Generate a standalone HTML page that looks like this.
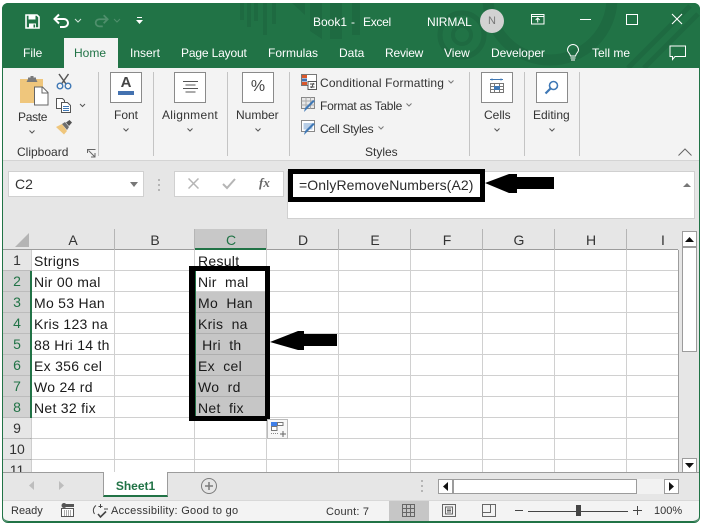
<!DOCTYPE html>
<html><head><meta charset="utf-8"><style>
html,body{margin:0;padding:0;background:#fff;width:704px;height:526px;overflow:hidden}
#r{position:relative;width:704px;height:526px;overflow:hidden;font-family:"Liberation Sans",sans-serif;color:#333}
#r div,#r span.a,#r svg{position:absolute}
.t{white-space:pre;line-height:16px;font-size:12px}
.w{color:#fff}
.c{white-space:pre;font-size:14px;line-height:21px;color:#1a1a1a;height:21px;letter-spacing:.28px}
.h{font-size:14px;line-height:20px;text-align:center;color:#333;top:230px}
.n{font-size:14px;line-height:21px;text-align:center;left:3px;width:28px;color:#333;background:#e6e6e6}
.box{background:#fff;border:1px solid #8a8a8a;box-sizing:border-box}
.sep{width:1px;background:#c4c4c4;top:72px;height:84px}
</style></head><body><div id="r">
<!-- window -->
<div style="left:2px;top:3px;width:698px;height:520px;background:#e6e6e6;border-radius:6px;box-sizing:border-box;border:1px solid #217346"></div>
<div style="left:2px;top:3px;width:698px;height:65px;background:#217346;border-radius:6px 6px 0 0"></div>
<!-- title pattern -->
<svg style="left:240px;top:3px" width="460" height="65" viewBox="0 0 460 65" fill="none">
<g stroke="#1e6a41" stroke-width="4"><path d="M2 0V17M9 0V24M16 0V18M25 0V32M34 0V21"/></g>
<g fill="#1e6a41"><path d="M52 0h13v12zM70 0h12v36l-12-8zM90 0h12v36H90zM112 0h8v32h-8z"/></g>
<g stroke="#1e6a41"><circle cx="222" cy="32" r="22" stroke-width="5"/><circle cx="222" cy="32" r="9" stroke-width="4"/><circle cx="310" cy="-5" r="62" stroke-width="11"/><path d="M388 65L450 3M404 65L458 11" stroke-width="5"/></g>
</svg>
<!-- QAT -->
<svg style="left:25px;top:14px" width="15" height="15" viewBox="0 0 15 15" fill="none"><path d="M1 1h11l2 2v11H1z" stroke="#fff" stroke-width="1.6"/><path d="M3.5 1.5h7v4h-7zM4 9.5h7v4.5H4z" fill="#fff"/><rect x="8.5" y="10.5" width="1.6" height="3" fill="#217346"/></svg>
<svg style="left:53px;top:13px" width="18" height="16" viewBox="0 0 18 16" fill="none"><path d="M2 6h9a4 4 0 0 1 0 8H7M6 1.5L1.5 6 6 10.5" stroke="#fff" stroke-width="2"/></svg>
<svg style="left:74px;top:18px" width="8" height="5" viewBox="0 0 8 5" fill="none"><path d="M1 1l3 3 3-3" stroke="#d5e5dc" stroke-width="1"/></svg>
<svg style="left:93px;top:13px" width="16" height="16" viewBox="0 0 18 16" fill="none"><path d="M16 6H7a4 4 0 0 0 0 8h4M12 1.5L16.5 6 12 10.5" stroke="#4f8f6c" stroke-width="2"/></svg>
<svg style="left:113px;top:18px" width="8" height="5" viewBox="0 0 8 5" fill="none"><path d="M1 1l3 3 3-3" stroke="#4f8f6c" stroke-width="1"/></svg>
<svg style="left:135px;top:16px" width="9" height="10" viewBox="0 0 9 10"><path d="M2 1h5v1H2zM1 4h7L4.500 8z" fill="#fff"/></svg>
<div class="t w" style="left:313px;top:14px;font-size:12px">Book1</div>
<div class="t w" style="left:351px;top:14px">-</div>
<div class="t w" style="left:363px;top:14px;letter-spacing:-.3px">Excel</div>
<div class="t w" style="left:427px;top:14px;letter-spacing:-.1px">NIRMAL</div>
<div style="left:480px;top:9px;width:24px;height:24px;border-radius:50%;background:#d2d2d2;color:#777;font-size:11px;line-height:24px;text-align:center">N</div>
<svg style="left:531px;top:14px" width="14" height="11" viewBox="0 0 14 11" fill="none"><path d="M.5 .5h12.500v9.500H.5zM.5 2.500h12.500M6.700 8.500V4.500M4.700 6l2-2 2 2" stroke="#fff"/></svg>
<div style="left:580px;top:19px;width:11px;height:1px;background:#fff"></div>
<div style="left:626px;top:14px;width:10px;height:9px;border:1px solid #fff"></div>
<svg style="left:671px;top:13px" width="12" height="12" viewBox="0 0 12 12"><path d="M1 1l10 10M11 1L1 11" stroke="#fff" stroke-width="1.100"/></svg>
<!-- tabs -->
<div style="left:64px;top:38px;width:54px;height:30px;background:#f3f3f3"></div>
<div class="t w" style="left:23px;top:45px">File</div>
<div class="t" style="left:74px;top:45px;color:#217346">Home</div>
<div class="t w" style="left:130px;top:45px">Insert</div>
<div class="t w" style="left:181px;top:45px;letter-spacing:-.15px">Page Layout</div>
<div class="t w" style="left:268px;top:45px">Formulas</div>
<div class="t w" style="left:339px;top:45px">Data</div>
<div class="t w" style="left:385px;top:45px;letter-spacing:-.2px">Review</div>
<div class="t w" style="left:444px;top:45px">View</div>
<div class="t w" style="left:491px;top:45px;letter-spacing:-.1px">Developer</div>
<svg style="left:566px;top:44px" width="14" height="18" viewBox="0 0 14 18" fill="none"><path d="M4.500 12C4 9 1.500 8.500 1.500 6a5.500 5.500 0 0 1 11 0c0 2.500-2.500 3-3 6zM4.500 14h5M5 16h4" stroke="#fff"/></svg>
<div class="t w" style="left:592px;top:45px">Tell me</div>
<svg style="left:669px;top:45px" width="18" height="16" viewBox="0 0 18 16" fill="none"><path d="M1 1h15.500v10.500H6L3.500 14.500v-3H1z" stroke="#fff"/></svg>
<!-- ribbon -->
<div style="left:3px;top:68px;width:696px;height:92px;background:#f3f3f3;border-bottom:1px solid #d4d4d4"></div>
<!-- paste -->
<svg style="left:19px;top:75px" width="30" height="31" viewBox="0 0 30 31"><path d="M1 4h23v24H1z" fill="#efc67c"/><path d="M9 4V2.500h2.500V1h3v1.500H17V4l1.500 3h-11z" fill="#7a7a7a"/><path d="M15.500 12h8l5.500 5.500V30H15.500z" fill="#fff" stroke="#666"/><path d="M23 12v6h6" fill="none" stroke="#666"/></svg>
<div class="t" style="left:18px;top:109px;letter-spacing:-.3px">Paste</div>
<svg style="left:29px;top:130px" width="6" height="4" viewBox="0 0 6 4" fill="none"><path d="M.5 .5L3 3 5.500 .5" stroke="#555"/></svg>
<svg style="left:56px;top:73px" width="16" height="17" viewBox="0 0 16 17" fill="none"><path d="M3 1l7 10M12.500 1l-7 10" stroke="#555" stroke-width="1.500"/><circle cx="4" cy="13" r="2.800" stroke="#3f78b5" stroke-width="1.400"/><circle cx="12" cy="13" r="2.800" stroke="#3f78b5" stroke-width="1.400"/></svg>
<svg style="left:56px;top:98px" width="16" height="15" viewBox="0 0 16 15" fill="#fff" stroke="#555"><path d="M.5 .5h6l2 2v8H.5z"/><path d="M5.500 4.500h6l3 3v7h-9z"/><path d="M7 8.500h6M7 10.500h6M7 12.500h6" stroke="#3f78b5"/></svg>
<svg style="left:79px;top:103px" width="7" height="5" viewBox="0 0 7 5" fill="none"><path d="M1 1l2.500 2.500L6 1" stroke="#555"/></svg>
<svg style="left:56px;top:120px" width="17" height="15" viewBox="0 0 17 15"><path d="M0 7l6-3 5 7-3 3.500z" fill="#efc67c"/><path d="M6 4l3-2 4 5-2 3z" fill="#6f6f6f"/><path d="M10 2.500L13.500 0 16 2.500 13 6z" fill="#555"/></svg>
<div class="t" style="left:17px;top:144px">Clipboard</div>
<svg style="left:87px;top:149px" width="9" height="9" viewBox="0 0 9 9" fill="none" stroke="#666"><path d="M.5 4V.5h8M1.500 1.500L7.500 7.500M8 4v4H4"/></svg>
<div class="sep" style="left:98px"></div>
<!-- font etc -->
<div class="box" style="left:110px;top:72px;width:32px;height:31px"></div>
<div style="left:110px;top:72px;width:32px;text-align:center;font-size:15px;line-height:22px;font-weight:bold;color:#444">A</div>
<div style="left:118px;top:91px;width:16px;height:4px;background:#4472b0"></div>
<div class="t" style="left:114px;top:107px">Font</div>
<svg style="left:123px;top:128px" width="6" height="4" viewBox="0 0 6 4" fill="none"><path d="M.5 .5L3 3 5.500 .5" stroke="#555"/></svg>
<div class="sep" style="left:153px"></div>
<div class="box" style="left:174px;top:72px;width:32px;height:31px"></div>
<svg style="left:183px;top:81px" width="15" height="12" viewBox="0 0 15 12" stroke="#555"><path d="M0 .5h15M2.500 4h10M0 7.500h15M2.500 11h10"/></svg>
<div class="t" style="left:162px;top:107px;letter-spacing:.3px">Alignment</div>
<svg style="left:187px;top:128px" width="6" height="4" viewBox="0 0 6 4" fill="none"><path d="M.5 .5L3 3 5.500 .5" stroke="#555"/></svg>
<div class="sep" style="left:227px"></div>
<div class="box" style="left:242px;top:72px;width:32px;height:31px"></div>
<div style="left:242px;top:78px;width:32px;text-align:center;font-size:16px;line-height:18px;color:#444">%</div>
<div class="t" style="left:236px;top:107px">Number</div>
<svg style="left:255px;top:128px" width="6" height="4" viewBox="0 0 6 4" fill="none"><path d="M.5 .5L3 3 5.500 .5" stroke="#555"/></svg>
<div class="sep" style="left:289px"></div>
<!-- styles -->
<svg style="left:301px;top:74px" width="16" height="16" viewBox="0 0 16 16"><path d="M.5 .5h15v11H.5z" fill="#fff" stroke="#777"/><path d="M1 1h5v3H1z" fill="#d9572b"/><path d="M1 4.500h5v3H1z" fill="#4472b0"/><path d="M1 8h5v3H1z" fill="#d9572b"/><path d="M7 7.500h8.500v8H7z" fill="#fff" stroke="#555"/><path d="M9 10h4.500M9 13h4.500M12.500 9l-2 5" stroke="#444" fill="none"/></svg>
<div class="t" style="left:320px;top:75px;font-size:12px;letter-spacing:.15px">Conditional Formatting</div>
<svg style="left:448px;top:80px" width="6" height="4" viewBox="0 0 6 4" fill="none"><path d="M.5 .5L3 3 5.500 .5" stroke="#777"/></svg>
<svg style="left:301px;top:97px" width="16" height="16" viewBox="0 0 16 16"><path d="M.5 .5h13v11H.5z" fill="#e8e8e8" stroke="#888"/><path d="M5 .5v11M9.500 .5v11M.5 4h13M.5 8h13" stroke="#aaa" fill="none"/><path d="M14 4L5 13l-2 2 1-4 8-8z" fill="#3f78b5"/></svg>
<div class="t" style="left:320px;top:98px;letter-spacing:-.25px">Format as Table</div>
<svg style="left:406px;top:103px" width="6" height="4" viewBox="0 0 6 4" fill="none"><path d="M.5 .5L3 3 5.500 .5" stroke="#777"/></svg>
<svg style="left:301px;top:120px" width="16" height="16" viewBox="0 0 16 16"><path d="M.5 .5h13v11H.5z" fill="#fff" stroke="#888"/><path d="M2.500 3h9v6.500h-9z" fill="#b7cde6"/><path d="M14 4L5 13l-2 2 1-4 8-8z" fill="#3f78b5"/></svg>
<div class="t" style="left:320px;top:121px;letter-spacing:-.3px">Cell Styles</div>
<svg style="left:378px;top:126px" width="6" height="4" viewBox="0 0 6 4" fill="none"><path d="M.5 .5L3 3 5.500 .5" stroke="#777"/></svg>
<div class="t" style="left:365px;top:144px">Styles</div>
<div class="sep" style="left:469px"></div>
<div class="box" style="left:481px;top:72px;width:32px;height:31px"></div>
<svg style="left:489px;top:78px" width="16" height="18" viewBox="0 0 16 18" fill="none"><path d="M1 1.500h13M3 .5v2M12 .5v2" stroke="#3f78b5"/><path d="M1.500 5.500h13v9h-13zM1.500 8.500h13M1.500 11.500h13M5.500 5.500v9M10.500 5.500v9" stroke="#777"/><rect x="5" y="8" width="6" height="4" fill="#3f78b5"/></svg>
<div class="t" style="left:484px;top:107px">Cells</div>
<svg style="left:494px;top:128px" width="6" height="4" viewBox="0 0 6 4" fill="none"><path d="M.5 .5L3 3 5.500 .5" stroke="#555"/></svg>
<div class="sep" style="left:524px"></div>
<div class="box" style="left:536px;top:72px;width:32px;height:31px"></div>
<svg style="left:544px;top:80px" width="15" height="15" viewBox="0 0 15 15" fill="none"><circle cx="9.500" cy="5.500" r="4" stroke="#3f78b5" stroke-width="1.600"/><path d="M6.500 8.500L1.500 13.500" stroke="#3f78b5" stroke-width="2.200"/></svg>
<div class="t" style="left:533px;top:107px">Editing</div>
<svg style="left:549px;top:128px" width="6" height="4" viewBox="0 0 6 4" fill="none"><path d="M.5 .5L3 3 5.500 .5" stroke="#555"/></svg>
<div class="sep" style="left:579px"></div>
<svg style="left:678px;top:148px" width="14" height="8" viewBox="0 0 14 8" fill="none"><path d="M.5 7.500L7 1l6.500 6.500" stroke="#666"/></svg>
<!-- formula bar -->
<div style="left:8px;top:171px;width:136px;height:26px;background:#fff;border:1px solid #d0d0d0;box-sizing:border-box"></div>
<div class="t" style="left:15px;top:176px;font-size:14px">C2</div>
<svg style="left:130px;top:182px" width="8" height="5" viewBox="0 0 8 5"><path d="M0 0h8L4 5z" fill="#777"/></svg>
<svg style="left:158px;top:179px" width="3" height="13" viewBox="0 0 3 13" fill="#b5b5b5"><path d="M0 0h2v2H0zM0 5h2v2H0zM0 10h2v2H0z"/></svg>
<div style="left:174px;top:171px;width:110px;height:26px;background:#fff;border:1px solid #d0d0d0;box-sizing:border-box"></div>
<svg style="left:188px;top:178px" width="11" height="11" viewBox="0 0 11 11"><path d="M.5 .5l10 10M10.500 .5L.5 10.500" stroke="#b5b5b5" stroke-width="1.500"/></svg>
<svg style="left:222px;top:178px" width="14" height="12" viewBox="0 0 14 12" fill="none"><path d="M1 6l4 4 8-9" stroke="#b5b5b5" stroke-width="2"/></svg>
<div style="left:259px;top:175px;font:italic bold 13px 'Liberation Serif',serif;color:#666;line-height:16px">fx</div>
<div style="left:287px;top:171px;width:408px;height:48px;background:#fff;border:1px solid #d0d0d0;box-sizing:border-box"></div>
<div class="t" style="left:299px;top:177px;font-size:14px;color:#2b2b2b;letter-spacing:.1px">=OnlyRemoveNumbers(A2)</div>
<svg style="left:683px;top:182px" width="8" height="5" viewBox="0 0 8 5"><path d="M0 5L4 1l4 4z" fill="#777"/></svg>
<!-- annotation box -->
<div style="left:288px;top:169px;width:197px;height:33px;border:5px solid #000;box-sizing:border-box"></div>
<svg style="left:485px;top:173px" width="70" height="22" viewBox="0 0 70 22"><path d="M0 10L24 1h8v3h37v12H32v4h-8z" fill="#000"/></svg>
<!-- column headers -->
<div style="left:3px;top:229px;width:675px;height:21px;background:#e6e6e6;border-bottom:1px solid #9c9c9c;box-sizing:border-box"></div>
<svg style="left:15px;top:233px" width="14" height="14" viewBox="0 0 14 14"><path d="M14 0v14H0z" fill="#b4b4b4"/></svg>
<div style="left:194px;top:229px;width:73px;height:21px;background:#c8c8c8;border-bottom:2px solid #217346;box-sizing:border-box"></div>
<div class="h" style="left:31px;width:84px">A</div>
<div class="h" style="left:115px;width:80px">B</div>
<div class="h" style="left:195px;width:72px;color:#217346">C</div>
<div class="h" style="left:267px;width:72px">D</div>
<div class="h" style="left:339px;width:72px">E</div>
<div class="h" style="left:411px;width:72px">F</div>
<div class="h" style="left:483px;width:72px">G</div>
<div class="h" style="left:555px;width:72px">H</div>
<div class="h" style="left:627px;width:72px">I</div>
<svg style="left:0;top:0;width:704px;height:526px" width="704" height="526" viewBox="0 0 704 526">
<rect x="31" y="250" width="647" height="222" fill="#fff"/>
<rect x="3" y="250" width="28" height="222" fill="#e6e6e6"/>
<rect x="3" y="271" width="28" height="147" fill="#d2d2d2"/>
<rect x="195" y="292" width="72" height="126" fill="#c6c6c6"/>
<g stroke="#d0d0d0"><path d="M31 270.500H678M31 291.500H678M31 312.500H678M31 333.500H678M31 354.500H678M31 375.500H678M31 396.500H678M31 417.500H678M31 438.500H678M31 459.500H678"/><path d="M114.500 250V472M194.500 250V472M266.500 250V472M338.500 250V472M410.500 250V472M482.500 250V472M554.500 250V472M626.500 250V472"/></g>
<path d="M195 312.500H267M195 333.500H267M195 354.500H267M195 375.500H267M195 396.500H267" stroke="#aeaeae"/>
<path d="M114.500 229V250M194.500 229V250M266.500 229V250M338.500 229V250M410.500 229V250M482.500 229V250M554.500 229V250M626.500 229V250" stroke="#b5b5b5"/>
<path d="M3 270.500H31M3 291.500H31M3 312.500H31M3 333.500H31M3 354.500H31M3 375.500H31M3 396.500H31M3 417.500H31M3 438.500H31M3 459.500H31" stroke="#bcbcbc"/>
<path d="M31 250V472" stroke="#9c9c9c"/><path d="M678.500 250V472" stroke="#9c9c9c"/>
<rect x="30" y="271" width="2" height="147" fill="#217346"/>
</svg>
<div class="n" style="top:250px;height:20px">1</div>
<div class="n" style="top:271px;background:none;color:#217346">2</div>
<div class="n" style="top:292px;background:none;color:#217346">3</div>
<div class="n" style="top:313px;background:none;color:#217346">4</div>
<div class="n" style="top:334px;background:none;color:#217346">5</div>
<div class="n" style="top:355px;background:none;color:#217346">6</div>
<div class="n" style="top:376px;background:none;color:#217346">7</div>
<div class="n" style="top:397px;background:none;color:#217346">8</div>
<div class="n" style="top:418px;height:20px">9</div>
<div class="n" style="top:439px;height:20px">10</div>
<div class="n" style="top:460px;height:12px;overflow:hidden;line-height:21px">11</div>
<div class="c" style="left:34px;top:251px">Strigns</div>
<div class="c" style="left:34px;top:272px">Nir 00 mal</div>
<div class="c" style="left:34px;top:293px">Mo 53 Han</div>
<div class="c" style="left:34px;top:314px">Kris 123 na</div>
<div class="c" style="left:34px;top:335px">88 Hri 14 th</div>
<div class="c" style="left:34px;top:356px">Ex 356 cel</div>
<div class="c" style="left:34px;top:377px">Wo 24 rd</div>
<div class="c" style="left:34px;top:398px">Net 32 fix</div>
<div class="c" style="left:198px;top:251px">Result</div>
<div class="c" style="left:198px;top:272px">Nir  mal</div>
<div class="c" style="left:198px;top:293px">Mo  Han</div>
<div class="c" style="left:198px;top:314px">Kris  na</div>
<div class="c" style="left:198px;top:335px"> Hri  th</div>
<div class="c" style="left:198px;top:356px">Ex  cel</div>
<div class="c" style="left:198px;top:377px">Wo  rd</div>
<div class="c" style="left:198px;top:398px">Net  fix</div>
<!-- annotation on grid -->
<div style="left:189px;top:266px;width:81px;height:155px;border:solid #000;border-width:5px 5px 5px 6px;box-sizing:border-box"></div>
<div style="left:195px;top:271px;width:1px;height:145px;background:#217346"></div>
<svg style="left:270px;top:330px" width="68" height="22" viewBox="0 0 68 22"><path d="M0 12L28 1h6v3h33v12H34v4h-6z" fill="#000"/></svg>
<!-- quick analysis -->
<svg style="left:267px;top:419px" width="21" height="20" viewBox="0 0 21 20"><rect x=".5" y=".5" width="20" height="19" fill="#f8f8f8" stroke="#bbb"/><rect x="4" y="3" width="6" height="4" fill="#3f7fe8"/><path d="M10.500 3.500h5.500v3h-5.500zM4.500 7.500h5.500v4h-5.500z" fill="#fff" stroke="#777"/><path d="M13 15h6M16 12v6" stroke="#666"/><path d="M4 14.500h7" stroke="#888" stroke-dasharray="1 1"/></svg>
<!-- vertical scrollbar -->
<div style="left:679px;top:229px;width:20px;height:243px;background:#e6e6e6"></div>
<div class="box" style="left:682px;top:231px;width:15px;height:16px;border-color:#9c9c9c"></div>
<svg style="left:685px;top:237px" width="9" height="5" viewBox="0 0 9 5"><path d="M0 5L4.500 0 9 5z" fill="#111"/></svg>
<div class="box" style="left:682px;top:247px;width:15px;height:105px;border-color:#9c9c9c"></div>
<div class="box" style="left:682px;top:458px;width:15px;height:15px;border-color:#9c9c9c"></div>
<svg style="left:685px;top:463px" width="9" height="5" viewBox="0 0 9 5"><path d="M0 0L4.500 5 9 0z" fill="#111"/></svg>
<!-- sheet tabs -->
<div style="left:3px;top:472px;width:696px;height:28px;background:#e6e6e6;border-top:1px solid #9c9c9c;box-sizing:border-box"></div>
<div style="left:103px;top:472px;width:65px;height:25px;background:#fff;border:1px solid #9c9c9c;border-top:0;border-bottom:2px solid #217346;box-sizing:border-box"></div>
<div class="t" style="left:103px;top:478px;width:65px;text-align:center;font-weight:bold;color:#217346">Sheet1</div>
<svg style="left:29px;top:481px" width="6" height="9" viewBox="0 0 6 9"><path d="M5 0L0 4.500 5 9z" fill="#bdbdbd"/></svg>
<svg style="left:58px;top:481px" width="6" height="9" viewBox="0 0 6 9"><path d="M1 0L6 4.500 1 9z" fill="#bdbdbd"/></svg>
<svg style="left:200px;top:477px" width="18" height="18" viewBox="0 0 18 18" fill="none"><circle cx="9" cy="9" r="7.500" stroke="#7c7c7c"/><path d="M9 5v8M5 9h8" stroke="#7c7c7c" stroke-width="1.500"/></svg>
<svg style="left:421px;top:480px" width="3" height="13" viewBox="0 0 3 13" fill="#b5b5b5"><path d="M0 0h2v2H0zM0 5h2v2H0zM0 10h2v2H0z"/></svg>
<div style="left:438px;top:479px;width:241px;height:15px;background:#f2f2f2"></div>
<div class="box" style="left:438px;top:479px;width:15px;height:15px;border-color:#9c9c9c"></div>
<svg style="left:443px;top:482px" width="5" height="9" viewBox="0 0 5 9"><path d="M5 0L0 4.500 5 9z" fill="#111"/></svg>
<div class="box" style="left:453px;top:479px;width:184px;height:15px;border-color:#9c9c9c"></div>
<div class="box" style="left:664px;top:479px;width:15px;height:15px;border-color:#9c9c9c"></div>
<svg style="left:669px;top:482px" width="5" height="9" viewBox="0 0 5 9"><path d="M0 0L5 4.500 0 9z" fill="#111"/></svg>
<!-- status -->
<div style="left:3px;top:500px;width:696px;height:22px;background:#f3f3f3;border-bottom:1px solid #217346;border-top:1px solid #d8d8d8;box-sizing:border-box;border-radius:0 0 6px 6px"></div>
<div class="t" style="left:11px;top:503px;font-size:11px">Ready</div>
<svg style="left:61px;top:503px" width="13" height="14" viewBox="0 0 13 14"><circle cx="3" cy="2.500" r="2.500" fill="#555"/><rect x="5" y="1" width="8" height="3" fill="#555"/><path d="M.5 5.500h12v8H.5z" fill="#fff" stroke="#555"/><path d="M3 8h7M3 10h7M3 12h7" stroke="#555" stroke-dasharray="1 1"/></svg>
<svg style="left:91px;top:503px" width="18" height="16" viewBox="0 0 18 16" fill="none" stroke="#444"><path d="M5 2.500A6 6 0 0 0 3.500 11M9.500 1v4M7.500 3.500h4M13 6h4"/><path d="M7 11l2.500 3L15 8.500" stroke-width="1.600"/></svg>
<div class="t" style="left:111px;top:503px;font-size:11px;letter-spacing:.28px">Accessibility: Good to go</div>
<div class="t" style="left:326px;top:504px;font-size:11px;letter-spacing:.2px">Count: 7</div>
<div style="left:389px;top:501px;width:40px;height:20px;background:#c6c6c6"></div>
<svg style="left:402px;top:504px" width="13" height="13" viewBox="0 0 13 13" fill="none" stroke="#666"><path d="M.5 .5h12v12H.5zM.5 4.500h12M.5 8.500h12M4.500 .5v12M8.500 .5v12"/></svg>
<svg style="left:442px;top:504px" width="14" height="13" viewBox="0 0 14 13" fill="none" stroke="#666"><path d="M.5 .5h13v12H.5zM3.500 3h7v7h-7zM5 5h4M5 6.500h4M5 8h4"/></svg>
<svg style="left:482px;top:504px" width="14" height="13" viewBox="0 0 14 13" fill="none" stroke="#666"><path d="M.5 .5h13v12H.5zM.5 8.500h8V.5"/></svg>
<div style="left:515px;top:510px;width:8px;height:1px;background:#444"></div>
<div style="left:528px;top:511px;width:100px;height:1px;background:#444"></div>
<div style="left:576px;top:505px;width:5px;height:11px;background:#444"></div>
<div style="left:633px;top:510px;width:9px;height:1px;background:#444"></div>
<div style="left:637px;top:506px;width:1px;height:9px;background:#444"></div>
<div class="t" style="left:654px;top:503px;font-size:11px">100%</div>
</div></body></html>
